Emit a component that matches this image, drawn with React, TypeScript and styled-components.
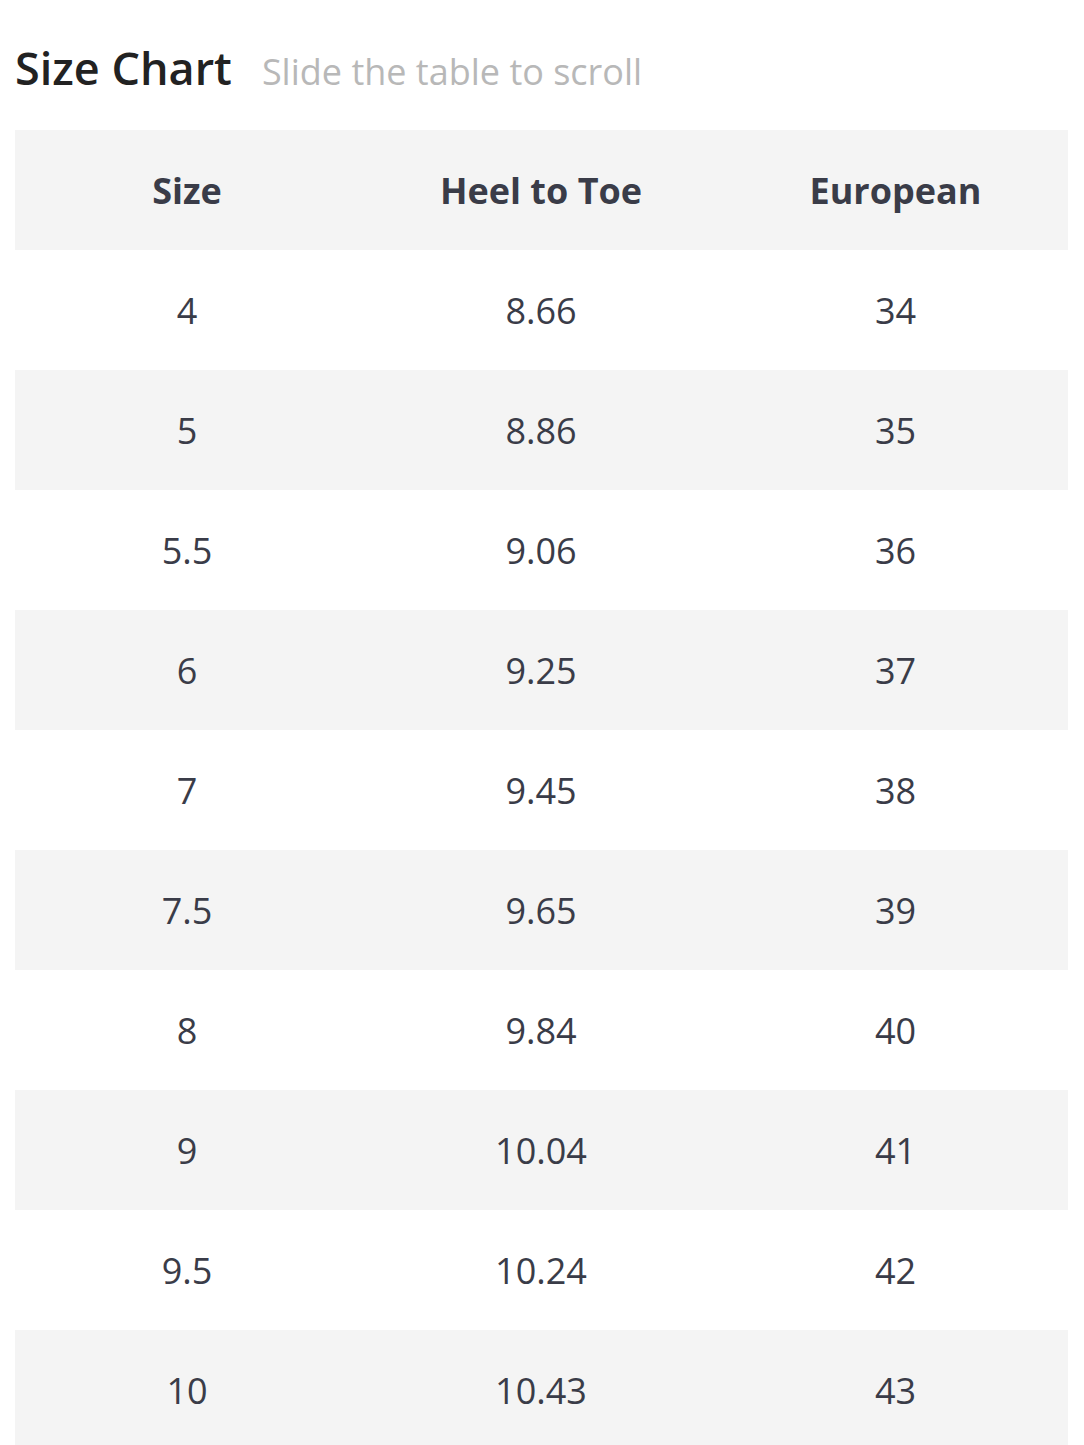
import React from "react";
import styled, { createGlobalStyle } from "styled-components";

const Global = createGlobalStyle`
  html, body { margin: 0; padding: 0; background: #ffffff; }
  body { font-family: "Open Sans", "Liberation Sans", sans-serif; }
`;

const Page = styled.div`
  padding: 0 16px 0 15px;
`;

const TitleRow = styled.div`
  display: flex;
  align-items: baseline;
  gap: 30px;
  height: 130px;
  box-sizing: border-box;
  padding-top: 41px;
`;

const Title = styled.h2`
  margin: 0;
  font-size: 45px;
  font-weight: 600;
  color: #222222;
  line-height: 1.2;
`;

const Hint = styled.span`
  font-size: 36px;
  font-weight: 400;
  color: #b8b8b8;
`;

const Table = styled.div`
  display: grid;
  grid-template-columns: 344px 364px 1fr;
`;

const Row = styled.div<{ $shade: boolean }>`
  display: contents;
  & > div {
    background: ${(p) => (p.$shade ? "#f4f4f4" : "#ffffff")};
  }
`;

const Cell = styled.div<{ $head?: boolean }>`
  height: 120px;
  display: flex;
  align-items: center;
  justify-content: center;
  font-size: 36px;
  font-weight: ${(p) => (p.$head ? 700 : 400)};
  color: #3a3c48;
`;

const rows: [string, string, string][] = [
  ["4", "8.66", "34"],
  ["5", "8.86", "35"],
  ["5.5", "9.06", "36"],
  ["6", "9.25", "37"],
  ["7", "9.45", "38"],
  ["7.5", "9.65", "39"],
  ["8", "9.84", "40"],
  ["9", "10.04", "41"],
  ["9.5", "10.24", "42"],
  ["10", "10.43", "43"],
];

export default function App() {
  return (
    <Page>
      <Global />
      <TitleRow>
        <Title>Size Chart</Title>
        <Hint>Slide the table to scroll</Hint>
      </TitleRow>
      <Table>
        <Row $shade>
          <Cell $head>Size</Cell>
          <Cell $head>Heel to Toe</Cell>
          <Cell $head>European</Cell>
        </Row>
        {rows.map((r, i) => (
          <Row key={r[0]} $shade={i % 2 === 1}>
            {r.map((c, j) => (
              <Cell key={j}>{c}</Cell>
            ))}
          </Row>
        ))}
      </Table>
    </Page>
  );
}
